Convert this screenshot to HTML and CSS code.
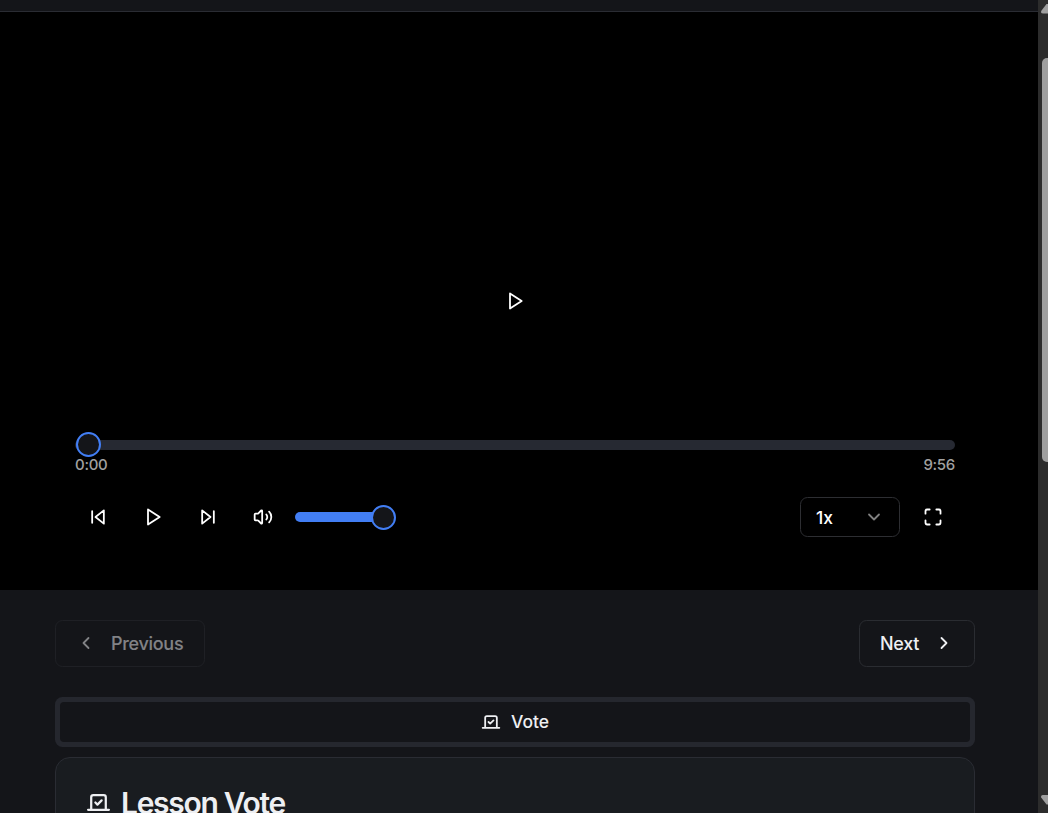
FILE: index.html
```html
<!DOCTYPE html>
<html lang="en">
<head>
<meta charset="utf-8">
<title>Lesson Vote</title>
<link rel="stylesheet" href="styles.css">
</head>
<body>
<div class="window">
  <main class="page">
    <div class="topbar"></div>
    <section class="player">
      <div class="stage">
        <svg class="icon" viewBox="0 0 24 24"><path d="m6 3 14 9-14 9V3z"/></svg>
      </div>
      <div class="controls">
        <div class="seek"><span class="thumb"></span></div>
        <div class="times"><span>0:00</span><span>9:56</span></div>
        <div class="row">
          <div class="group">
            <button class="control"><svg class="icon" viewBox="0 0 24 24"><path d="M19 20 9 12l10-8v16zM5 19V5"/></svg></button>
            <button class="control"><svg class="icon" viewBox="0 0 24 24"><path d="m6 3 14 9-14 9V3z"/></svg></button>
            <button class="control"><svg class="icon" viewBox="0 0 24 24"><path d="m5 4 10 8-10 8V4zM19 5v14"/></svg></button>
            <button class="control"><svg class="icon" viewBox="0 0 24 24"><path d="M11 4.702a.705.705 0 0 0-1.203-.498L6.413 7.587A1.4 1.4 0 0 1 5.416 8H3a1 1 0 0 0-1 1v6a1 1 0 0 0 1 1h2.416a1.4 1.4 0 0 1 .997.413l3.383 3.384A.705.705 0 0 0 11 19.298zM16 9a5 5 0 0 1 0 6M19.364 18.364a9 9 0 0 0 0-12.728"/></svg></button>
            <div class="volume"><span class="thumb"></span></div>
          </div>
          <div class="group">
            <button class="speed"><span>1x</span><svg class="icon chevron" viewBox="0 0 24 24"><path d="m6 9 6 6 6-6"/></svg></button>
            <button class="control"><svg class="icon" viewBox="0 0 24 24"><path d="M8 3H5a2 2 0 0 0-2 2v3M21 8V5a2 2 0 0 0-2-2h-3M3 16v3a2 2 0 0 0 2 2h3M16 21h3a2 2 0 0 0 2-2v-3"/></svg></button>
          </div>
        </div>
      </div>
    </section>
    <div class="content">
      <nav class="pager">
        <button class="step previous"><svg class="icon" viewBox="0 0 24 24"><path d="m15 18-6-6 6-6"/></svg><span>Previous</span></button>
        <button class="step next"><span>Next</span><svg class="icon" viewBox="0 0 24 24"><path d="m9 18 6-6-6-6"/></svg></button>
      </nav>
      <div class="tabs">
        <button class="tab"><svg class="icon" viewBox="0 0 24 24"><path d="m9 12 2 2 4-4M5 7c0-1.1.9-2 2-2h10a2 2 0 0 1 2 2v12H5V7ZM22 19H2"/></svg><span>Vote</span></button>
      </div>
      <section class="card">
        <h2 class="title"><svg class="icon large" viewBox="0 0 24 24"><path d="m9 12 2 2 4-4M5 7c0-1.1.9-2 2-2h10a2 2 0 0 1 2 2v12H5V7ZM22 19H2"/></svg><span>Lesson Vote</span></h2>
      </section>
    </div>
  </main>
  <aside class="scrollbar">
    <svg class="arrow" viewBox="0 0 10 14"><path d="M10 4H8.500L3.200 11Q2.500 13.500 5 13.500H10z"/></svg>
    <div class="handle"></div>
    <svg class="arrow" viewBox="0 0 10 14"><path d="M10 0H5Q2.500 0 3.200 2.500L8.500 9.500H10z"/></svg>
  </aside>
</div>
</body>
</html>
```
FILE: styles.css
```css
* { box-sizing: border-box; }
body {
  margin: 0;
  background: #141519;
  color: #eeeff2;
  font: 500 17.5px/25px Inter, sans-serif;
  overflow: hidden;
}
button {
  margin: 0;
  padding: 0;
  border: 0;
  background: transparent;
  color: inherit;
  font: inherit;
}
.window { display: flex; width: 100vw; height: 813px; overflow: hidden; }
.page { flex: 1; min-width: 0; }
.topbar { height: 12px; border-bottom: 1px solid #2a2c33; }
.icon {
  display: block;
  flex: none;
  width: 20px;
  height: 20px;
  fill: none;
  stroke: currentColor;
  stroke-width: 2.15;
  stroke-linecap: round;
  stroke-linejoin: round;
}
.icon.large { width: 25px; height: 25px; }
.player { height: 578px; background: #000; color: #fff; }
.stage {
  display: flex;
  height: 420px;
  padding: 279px 8px 0 0;
  justify-content: center;
}
.controls { padding: 8px 83px 0 75px; }
.seek, .volume {
  display: flex;
  align-items: center;
  height: 10px;
  border-radius: 5px;
  background: #262932;
}
.thumb {
  flex: none;
  width: 25px;
  height: 25px;
  border: 2px solid #427ef4;
  border-radius: 50%;
  background: #141519;
}
.seek .thumb { margin: 0 0 1px .5px; }
.times {
  display: flex;
  justify-content: space-between;
  padding-top: 5px;
  font-size: 15px;
  font-weight: 550;
  line-height: 20px;
  letter-spacing: -.3px;
  color: #a1a1a1;
}
.row { display: flex; align-items: center; justify-content: space-between; margin-top: 19px; height: 45px; }
.group { display: flex; align-items: center; gap: 10px; }
.control { display: grid; place-items: center; width: 45px; height: 45px; }
.volume { width: 100px; justify-content: flex-end; background: #427ef4; }
.volume .thumb { margin: 1px -.5px 0 0; }
.speed {
  display: flex;
  align-items: center;
  justify-content: space-between;
  width: 100px;
  height: 40px;
  padding: 0 15px;
  border: 1px solid #2d2e32;
  border-radius: 7.5px;
}
.speed span { padding-top: 1px; }
.chevron { opacity: .5; }
.content { padding: 30px 63px 0 55px; }
.pager { display: flex; justify-content: space-between; }
.step {
  display: flex;
  align-items: center;
  height: 47px;
  border: 1px solid #2a2c31;
  border-radius: 7.5px;
  padding: 0 20px;
  font-size: 18px;
  font-weight: 550;
  letter-spacing: -.3px;
}
.step .icon { margin-bottom: 1px; }
.previous { width: 150px; gap: 15px; opacity: .5; }
.next { width: 116px; gap: 15px; }
.tabs {
  height: 50px;
  margin-top: 30px;
  padding: 5px;
  border-radius: 7.5px;
  background: #25272e;
}
.tab {
  display: flex;
  align-items: center;
  justify-content: center;
  gap: 10px;
  width: 100%;
  height: 40px;
  border-radius: 4px;
  background: #141519;
}
.tab span { padding-bottom: 2px; }
.card {
  height: 200px;
  margin-top: 10px;
  padding: 30px;
  border: 1px solid #2a2c33;
  border-radius: 15px;
  background: #191c20;
}
.title {
  display: flex;
  align-items: center;
  gap: 10px;
  margin: 0;
  font-size: 30px;
  line-height: 30px;
  font-weight: 600;
  letter-spacing: -1.3px;
}
.title .icon { margin-bottom: 2px; }
.scrollbar {
  display: flex;
  flex-direction: column;
  width: 10px;
  height: 813px;
  background: #2c2c2c;
}
.arrow { width: 10px; height: 14px; fill: #9f9f9f; }
.handle {
  width: 6px;
  height: 404px;
  margin: 44px 0 333px 4px;
  border-radius: 5px 0 0 5px;
  background: #9f9f9f;
}
```
